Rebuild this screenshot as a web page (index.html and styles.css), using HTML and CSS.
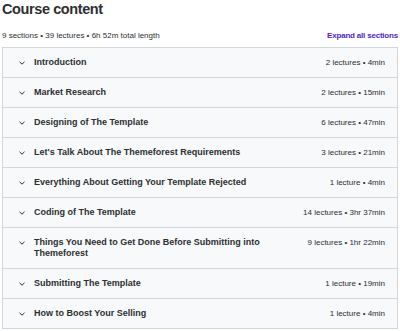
FILE: index.html
```html
<!DOCTYPE html>
<html lang="en">
<head>
    <meta charset="UTF-8">
    <meta name="viewport" content="width=device-width, initial-scale=1.0">
    <title>Course content</title>
    <link rel="stylesheet" href="styles.css">
</head>
<body>
<div class="course-content">
    <h2 class="title">Course content</h2>
    <div class="summary">
        <span class="summary-text">9 sections &bull; 39 lectures &bull; 6h 52m total length</span>
        <button class="expand-btn">Expand all sections</button>
    </div>
    <div class="sections">
        <div class="section-row">
            <svg class="chevron" viewBox="0 0 8 8"><path d="M1.5 2.8 L4 5.2 L6.5 2.8"/></svg>
            <span class="section-title">Introduction</span>
            <span class="section-meta">2 lectures &bull; 4min</span>
        </div>
        <div class="section-row">
            <svg class="chevron" viewBox="0 0 8 8"><path d="M1.5 2.8 L4 5.2 L6.5 2.8"/></svg>
            <span class="section-title">Market Research</span>
            <span class="section-meta">2 lectures &bull; 15min</span>
        </div>
        <div class="section-row">
            <svg class="chevron" viewBox="0 0 8 8"><path d="M1.5 2.8 L4 5.2 L6.5 2.8"/></svg>
            <span class="section-title">Designing of The Template</span>
            <span class="section-meta">6 lectures &bull; 47min</span>
        </div>
        <div class="section-row">
            <svg class="chevron" viewBox="0 0 8 8"><path d="M1.5 2.8 L4 5.2 L6.5 2.8"/></svg>
            <span class="section-title">Let's Talk About The Themeforest Requirements</span>
            <span class="section-meta">3 lectures &bull; 21min</span>
        </div>
        <div class="section-row">
            <svg class="chevron" viewBox="0 0 8 8"><path d="M1.5 2.8 L4 5.2 L6.5 2.8"/></svg>
            <span class="section-title">Everything About Getting Your Template Rejected</span>
            <span class="section-meta">1 lecture &bull; 4min</span>
        </div>
        <div class="section-row">
            <svg class="chevron" viewBox="0 0 8 8"><path d="M1.5 2.8 L4 5.2 L6.5 2.8"/></svg>
            <span class="section-title">Coding of The Template</span>
            <span class="section-meta">14 lectures &bull; 3hr 37min</span>
        </div>
        <div class="section-row">
            <svg class="chevron" viewBox="0 0 8 8"><path d="M1.5 2.8 L4 5.2 L6.5 2.8"/></svg>
            <span class="section-title">Things You Need to Get Done Before Submitting into Themeforest</span>
            <span class="section-meta">9 lectures &bull; 1hr 22min</span>
        </div>
        <div class="section-row">
            <svg class="chevron" viewBox="0 0 8 8"><path d="M1.5 2.8 L4 5.2 L6.5 2.8"/></svg>
            <span class="section-title">Submitting The Template</span>
            <span class="section-meta">1 lecture &bull; 19min</span>
        </div>
        <div class="section-row">
            <svg class="chevron" viewBox="0 0 8 8"><path d="M1.5 2.8 L4 5.2 L6.5 2.8"/></svg>
            <span class="section-title">How to Boost Your Selling</span>
            <span class="section-meta">1 lecture &bull; 4min</span>
        </div>
    </div>
</div>
</body>
</html>
```

FILE: styles.css
```css
body {
    margin: 0;
    padding: 0 2px;
    background-color: #ffffff;
    color: #2d2f31;
    font-family: "Liberation Sans", Arial, sans-serif;
}

.title {
    margin: 0;
    font-size: 14.5px;
    line-height: 19px;
    font-weight: bold;
    letter-spacing: -0.4px;
}

.summary {
    display: flex;
    justify-content: space-between;
    align-items: baseline;
    margin-top: 12px;
    margin-bottom: 6px;
    line-height: 10px;
}

.summary-text {
    font-size: 8px;
}

.expand-btn {
    padding: 0;
    border: none;
    background: none;
    color: #5624d0;
    font-family: inherit;
    font-size: 8px;
    font-weight: bold;
    letter-spacing: -0.2px;
    line-height: 10px;
    cursor: pointer;
}

.sections {
    border: 1px solid #d1d7dc;
}

.section-row {
    display: flex;
    align-items: flex-start;
    padding: 9px 12px 9px 13px;
    background-color: #f7f9fa;
    border-bottom: 1px solid #d1d7dc;
    line-height: 11px;
}

.section-row:last-child {
    border-bottom: none;
}

.chevron {
    width: 8px;
    height: 8px;
    margin-top: 2px;
    margin-left: 2px;
    margin-right: 8px;
    flex-shrink: 0;
    fill: none;
    stroke: #2d2f31;
    stroke-width: 1;
}

.section-title {
    flex: 1;
    max-width: 240px;
    font-size: 9px;
    font-weight: bold;
}

.section-meta {
    margin-left: auto;
    font-size: 8px;
    white-space: nowrap;
}
```
